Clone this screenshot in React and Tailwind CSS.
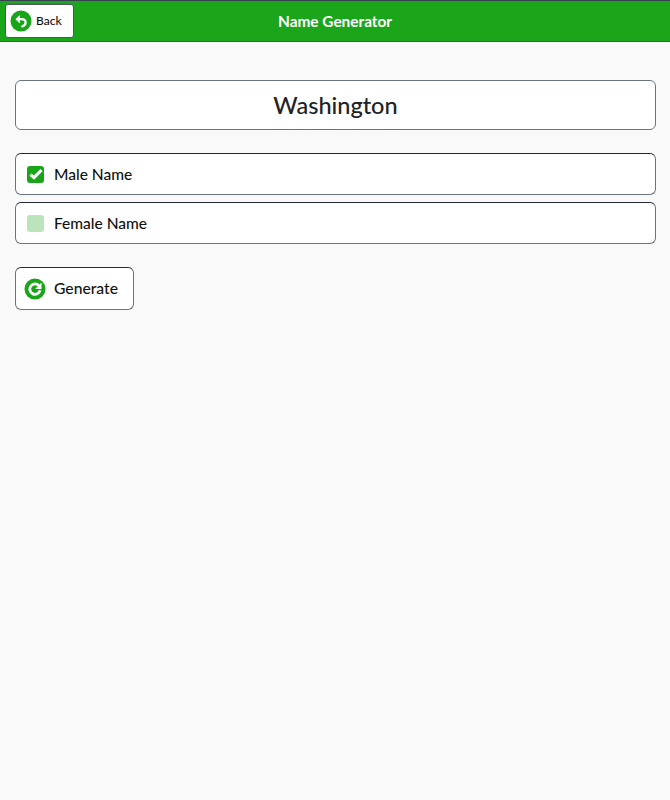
function BackIcon() {
  return (
    <svg width="22" height="22" viewBox="0 0 22 22" className="shrink-0">
      <circle cx="11" cy="11" r="10.500" fill="#18a518" />
      <path d="M8 9.200h3.600c2.500 0 4 1.500 4 3.400 0 1.800-1.200 3.200-3.300 3.800" fill="none" stroke="#fff" strokeWidth="2.300" strokeLinecap="round" />
      <path d="M9.800 5 5.400 9.200l4.400 4.200z" fill="#fff" />
    </svg>
  )
}

function RefreshIcon() {
  return (
    <svg width="22" height="22" viewBox="0 0 22 22" className="shrink-0">
      <circle cx="11" cy="11" r="10.500" fill="#18a518" />
      <path d="M15 7.800a5.200 5.200 0 1 0 1.100 4.400" fill="none" stroke="#fff" strokeWidth="2.800" />
      <path d="M17.500 4.600v6.400h-6.400z" fill="#fff" />
    </svg>
  )
}

function Checkbox({ checked }) {
  return (
    <span className={`flex h-[17px] w-[17px] shrink-0 items-center justify-center rounded-[3px] ${checked ? 'bg-[#18a518]' : 'bg-[#bbe4bb]'}`}>
      {checked && (
        <svg width="14" height="12" viewBox="0 0 14 12">
          <path d="M1.500 6.600 5 9.600 12.500 2" fill="none" stroke="#fff" strokeWidth="3.200" />
        </svg>
      )}
    </span>
  )
}

function Option({ label, checked, className }) {
  return (
    <div className={`flex h-[42px] items-center gap-[10px] rounded-[6px] border border-[#6b7280] border-t-[#1f2937] bg-white pl-[11px] text-[15.500px] font-medium text-[#111] ${className}`}>
      <Checkbox checked={checked} />
      <span className="pt-[2px]">{label}</span>
    </div>
  )
}

export default function App() {
  return (
    <div className="flex min-h-[800px] flex-col bg-[#f9f9f9] font-['Lato',sans-serif]">
      <header className="flex h-[42px] items-center border-t border-b border-t-[#374151] border-b-[#14851a] bg-[#1aa51a] pl-[5px]">
        <button className="flex h-[34px] w-[69px] items-center gap-[4px] rounded-[3px] border border-[#4b5563] bg-white pl-[4px] text-[12px] font-medium text-[#111]">
          <BackIcon />
          Back
        </button>
        <h1 className="ml-[204px] pt-[2px] text-[15.400px] font-bold text-white">Name Generator</h1>
      </header>
      <main className="flex flex-col pl-[15px] pr-[14px] pt-[38px]">
        <div className="flex h-[50px] items-center justify-center rounded-[6px] border border-[#6b7280] bg-white pt-[2px] text-[23.500px] font-medium text-[#222]">
          Washington
        </div>
        <Option label="Male Name" checked className="mt-[23px]" />
        <Option label="Female Name" className="mt-[7px]" />
        <button className="mt-[23px] flex h-[43px] w-[119px] items-center gap-[8px] rounded-[6px] border border-[#6b7280] border-t-[#1f2937] bg-white pl-[8px] text-[15.700px] font-medium text-[#111]">
          <RefreshIcon />
          Generate
        </button>
      </main>
    </div>
  )
}
